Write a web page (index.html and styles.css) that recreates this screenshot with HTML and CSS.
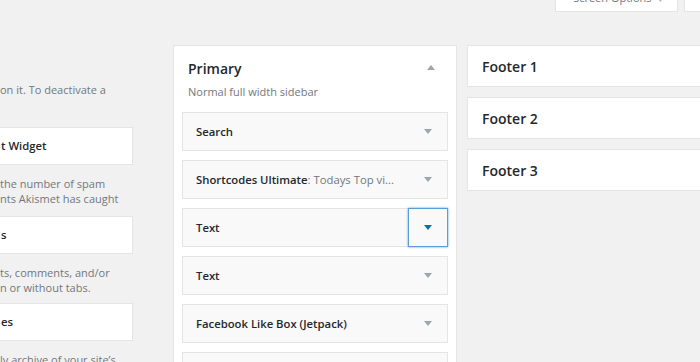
FILE: index.html
```html
<!DOCTYPE html>
<html lang="en">

<head>
    <meta charset="UTF-8" />
    <title>Widgets</title>
    <link rel="stylesheet" href="styles.css">
</head>

<body>

    <div class="screen-meta">
        <button class="meta-btn">Screen Options <span class="caret">&#9662;</span></button>
        <button class="meta-btn">Help <span class="caret">&#9662;</span></button>
    </div>

    <div class="widgets-wrap">

        <div class="available">
            <p class="desc first">on it. To deactivate a</p>

            <div class="avail-widget">t Widget</div>
            <p class="desc">the number of spam<br>nts Akismet has caught</p>

            <div class="avail-widget">s</div>
            <p class="desc tight">ts, comments, and/or<br>n or without tabs.</p>

            <div class="avail-widget">es</div>
            <p class="desc">ly archive of your site’s</p>
        </div>

        <div class="sidebar">
            <div class="sidebar-head">
                <h2>Primary</h2>
                <span class="arrow-up"></span>
            </div>
            <p class="sidebar-desc">Normal full width sidebar</p>

            <div class="widget">
                <span class="widget-title">Search</span>
                <span class="toggle"><span class="arrow"></span></span>
            </div>
            <div class="widget">
                <span class="widget-title">Shortcodes Ultimate<span class="in-title">: Todays Top vi...</span></span>
                <span class="toggle"><span class="arrow"></span></span>
            </div>
            <div class="widget">
                <span class="widget-title">Text</span>
                <span class="toggle focused"><span class="arrow"></span></span>
            </div>
            <div class="widget">
                <span class="widget-title">Text</span>
                <span class="toggle"><span class="arrow"></span></span>
            </div>
            <div class="widget">
                <span class="widget-title">Facebook Like Box (Jetpack)</span>
                <span class="toggle"><span class="arrow"></span></span>
            </div>
            <div class="widget">
                <span class="widget-title">Recent Posts</span>
                <span class="toggle"><span class="arrow"></span></span>
            </div>
        </div>

        <div class="footers">
            <div class="footer-box">Footer 1</div>
            <div class="footer-box">Footer 2</div>
            <div class="footer-box">Footer 3</div>
        </div>

    </div>

</body>

</html>
```

FILE: styles.css
```css
* {
    box-sizing: border-box;
}

html,
body {
    margin: 0;
    height: 100%;
    overflow: hidden;
}

body {
    font-family: 'Open Sans', sans-serif;
    background: #f1f1f1;
    color: #23282d;
}

.screen-meta {
    display: flex;
    justify-content: flex-end;
    gap: 6px;
    margin-top: -14px;
    margin-right: -53px;
}

.meta-btn {
    height: 26px;
    padding: 0 14px 0 17px;
    background: #fff;
    border: 1px solid #e5e5e5;
    border-top: none;
    color: #72777c;
    font-family: 'Open Sans', sans-serif;
    font-size: 11px;
    line-height: 22px;
}

.caret {
    font-size: 9px;
    margin-left: 4px;
    color: #a0a5aa;
}

.widgets-wrap {
    display: flex;
    align-items: flex-start;
    margin-top: 33px;
}

.available {
    width: 134px;
    margin-left: -1px;
    flex-shrink: 0;
}

.desc {
    margin: 0;
    padding: 11px 0 10px 1px;
    font-size: 11px;
    line-height: 15px;
    color: #72777c;
}

.desc.first {
    padding: 37px 0 30px 1px;
}

.desc.tight {
    padding-bottom: 8px;
}

.avail-widget {
    height: 38px;
    background: #fff;
    border: 1px solid #e5e5e5;
    font-size: 11.3px;
    font-weight: 600;
    line-height: 36px;
    padding-left: 1px;
}

.sidebar {
    width: 284px;
    margin-left: 40px;
    flex-shrink: 0;
    background: #fff;
    border: 1px solid #e5e5e5;
    padding: 0 8px;
    height: 400px;
}

.sidebar-head {
    display: flex;
    justify-content: space-between;
    align-items: center;
    padding: 12px 13px 0 6px;
}

.sidebar-head h2 {
    margin: 0;
    font-size: 14px;
    font-weight: 600;
    line-height: 22px;
}

.arrow-up {
    width: 0;
    height: 0;
    border-left: 4px solid transparent;
    border-right: 4px solid transparent;
    border-bottom: 5px solid #a0a5aa;
    margin-top: -4px;
}

.sidebar-desc {
    margin: 0;
    padding: 1px 6px 9px;
    font-size: 11px;
    line-height: 22px;
    color: #72777c;
}

.widget {
    display: flex;
    justify-content: space-between;
    height: 39px;
    margin-bottom: 9px;
    background: #f9f9f9;
    border: 1px solid #e5e5e5;
}

.widget-title {
    padding-left: 13px;
    font-size: 11.3px;
    font-weight: 600;
    line-height: 37px;
    white-space: nowrap;
}

.in-title {
    font-weight: 400;
    color: #72777c;
}

.toggle {
    display: flex;
    align-items: center;
    justify-content: center;
    width: 40px;
    margin: -1px -1px -1px 0;
    border: 1px solid transparent;
}

.toggle.focused {
    border-color: #5b9dd9;
    box-shadow: 0 0 2px rgba(30, 140, 190, 0.8);
}

.arrow {
    width: 0;
    height: 0;
    border-left: 4px solid transparent;
    border-right: 4px solid transparent;
    border-top: 5px solid #a0a5aa;
}

.focused .arrow {
    border-top-color: #0073aa;
}

.footers {
    flex: 1;
    margin-left: 10px;
    margin-right: -20px;
}

.footer-box {
    height: 42px;
    margin-bottom: 10px;
    background: #fff;
    border: 1px solid #e5e5e5;
    padding-left: 14px;
    font-size: 14px;
    font-weight: 600;
    line-height: 42px;
}
```
